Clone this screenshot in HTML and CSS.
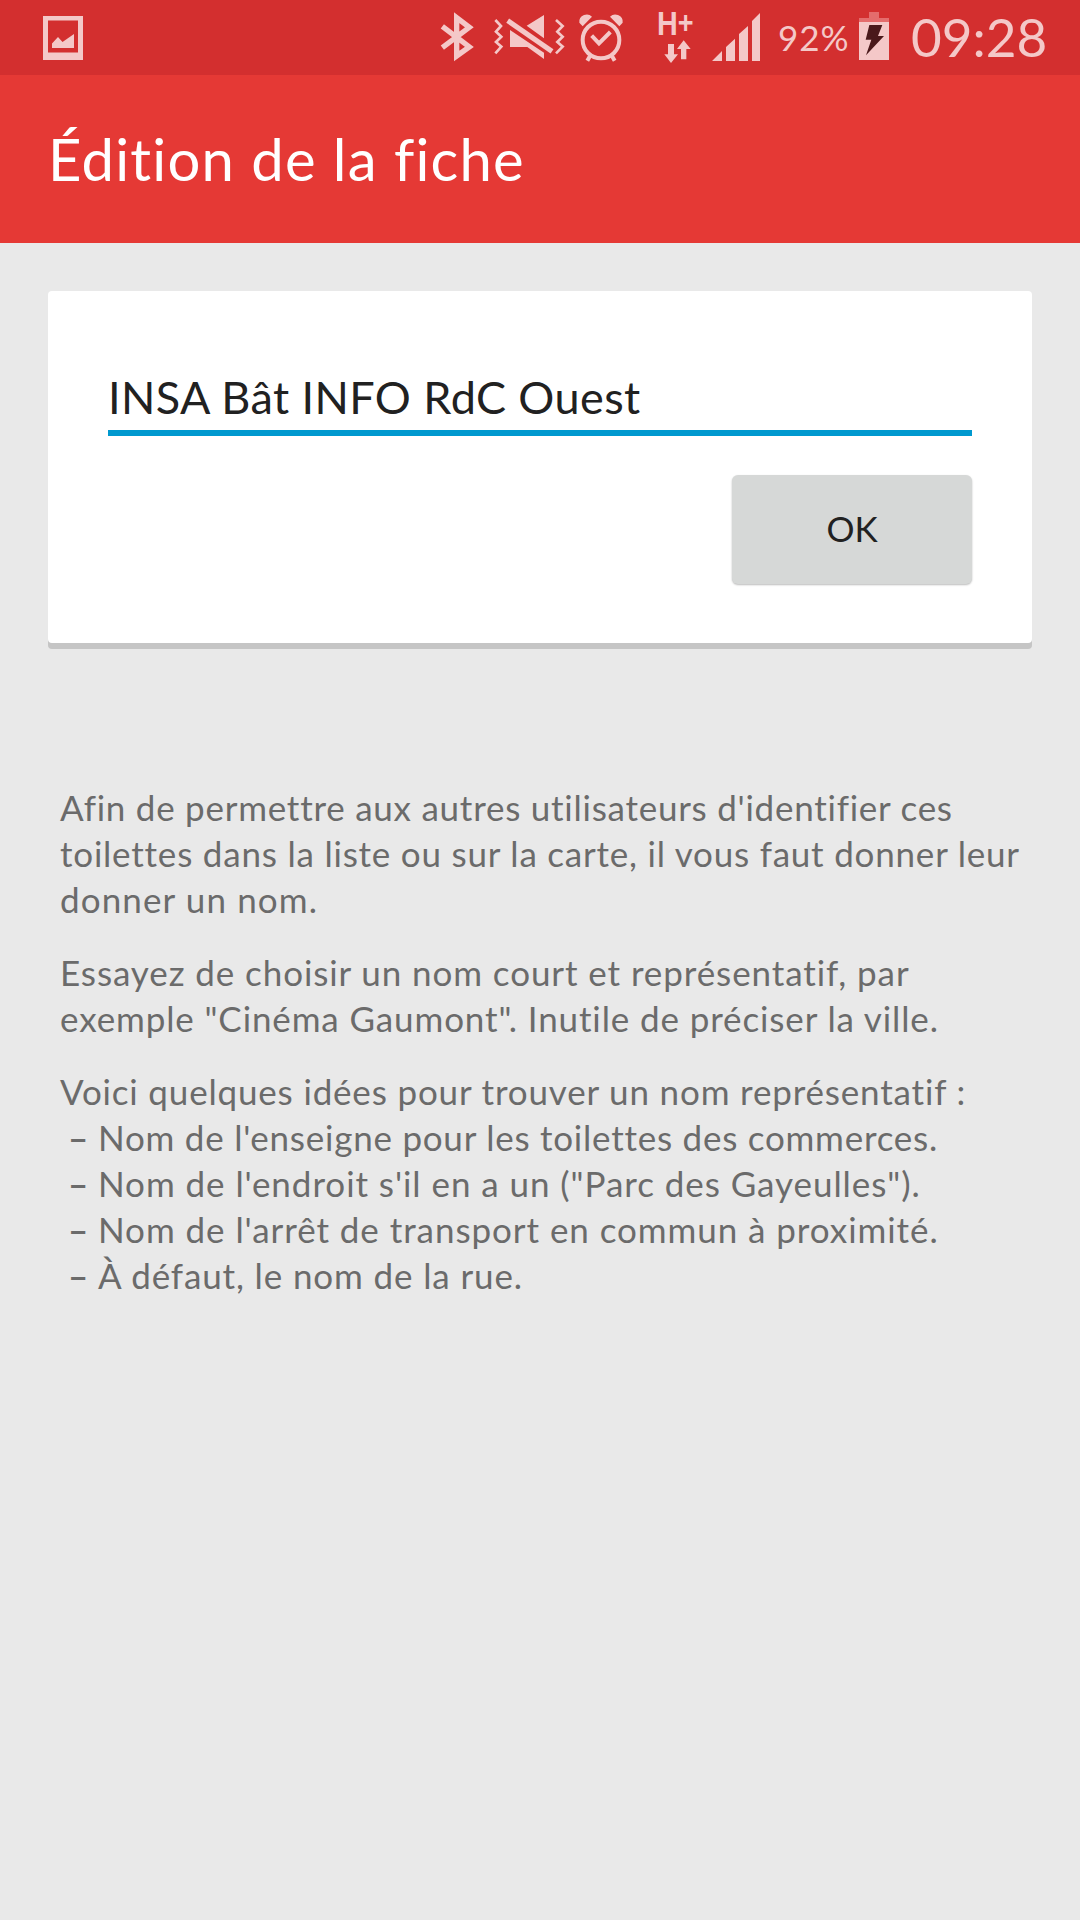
FILE: index.html
```html
<!DOCTYPE html>
<html lang="fr">
<head>
<meta charset="utf-8">
<title>Édition de la fiche</title>
<link rel="stylesheet" href="styles.css">
</head>
<body>
<header class="status-bar">
  <svg class="icon picture" viewBox="43 16 40 44" width="40" height="44"><path fill-rule="evenodd" d="M43 16h40v44H43zM48 20.500v32h30v-32z"/><path d="M52 43.500L58 37l4.500 5L74 34v14H52z"/></svg>
  <svg class="icon bluetooth" viewBox="60 36 105 150" width="35" height="50"><path class="line" stroke-width="16" stroke-miterlimit="10" d="M67 79L148 141L110 168V53L148 82L67 143"/></svg>
  <svg class="icon mute" viewBox="219 36 216 150" width="72" height="50"><path class="line" stroke-width="8" d="M226 60l17 18-15 17 16 15-16 16 16 14-18 20M408 60l20 18-16 17 16 15-16 16 16 14-20 20"/><path class="line" stroke-width="15" d="M263 62L396 154"/><path d="M372 45v70L320 77zM270 90L372 158v19L322 141H270z"/></svg>
  <svg class="icon alarm" viewBox="474 36 138 150" width="46" height="50"><circle class="line" cx="543" cy="120" r="55" stroke-width="12"/><path class="line" stroke-width="12" d="M515 107l22 23 34-34M510 168l-8 14M576 168l8 14"/><path d="M488 79L478 68Q476 52 492 45Q506 40 516 50ZM598 79L608 68Q610 52 594 45Q580 40 570 50Z"/></svg>
  <div class="network">
    <span class="network-type">H<span class="plus">+</span></span>
    <svg class="icon arrows" viewBox="732 120 81 69" width="27" height="23"><path d="M744 132h18v31h12l-21 26-20-26h11zM783 178v-31h-12l20-26 21 26h-13v31z"/></svg>
  </div>
  <svg class="icon signal" viewBox="876 36 144 147" width="48" height="49"><path d="M876 183l30-30v30zM918 183v-42l27-25v67zM957 183v-81l27-24v105zM996 183V63l24-24v144z"/></svg>
  <span class="percent">92%</span>
  <svg class="icon battery" viewBox="327 36 90 144" width="30" height="48"><path class="battery-empty" d="M357 36h30v18h30v12h-90V54h30z"/><path d="M327 66h90v114h-90z"/><path class="bolt" d="M358 75h39l-13 33h18l-54 58 16-47h-17z"/></svg>
  <span class="clock">09:28</span>
</header>
<div class="app-bar"><h1 class="title">Édition de la fiche</h1></div>
<main class="content">
  <section class="card">
    <div class="field">INSA Bât INFO RdC Ouest</div>
    <button class="ok">OK</button>
  </section>
  <section class="help">
    <p class="para"><span class="line-a">Afin de permettre aux autres utilisateurs d'identifier ces</span><span class="line-b">toilettes dans la liste ou sur la carte, il vous faut donner leur</span><span class="line-c">donner un nom.</span></p>
    <p class="para"><span class="line-d">Essayez de choisir un nom court et représentatif, par</span><span class="line-e">exemple "Cinéma Gaumont". Inutile de préciser la ville.</span></p>
    <p class="para"><span class="line-f">Voici quelques idées pour trouver un nom représentatif :</span></p>
    <ul class="ideas">
      <li><span class="line-g">Nom de l'enseigne pour les toilettes des commerces.</span></li>
      <li><span class="line-h">Nom de l'endroit s'il en a un ("Parc des Gayeulles").</span></li>
      <li><span class="line-i">Nom de l'arrêt de transport en commun à proximité.</span></li>
      <li><span class="line-j">À défaut, le nom de la rue.</span></li>
    </ul>
  </section>
</main>
</body>
</html>
```
FILE: styles.css
```css
* { box-sizing: border-box; }
body { margin: 0; min-height: 1920px; background: #e9e9e9; color: #6b6b6b; font-family: Lato, sans-serif; font-variant-ligatures: none; }
.status-bar { display: flex; align-items: flex-start; height: 75px; padding: 12px 0 0 43px; background: #d32f2f; color: #f4c8c8; }
.icon { display: block; flex: none; fill: #f4c8c8; overflow: visible; }
.icon .line { fill: none; stroke: #f4c8c8; }
.icon .battery-empty { fill: #e46c6c; }
.icon .bolt { fill: #4a191b; }
.picture { margin-top: 4px; }
.bluetooth { margin-left: 357px; }
.mute { margin-left: 18px; }
.alarm { margin-left: 13px; }
.network { width: 37px; height: 51px; margin-left: 34px; }
.network-type { display: flex; width: 42px; height: 28px; margin-left: -1px; font: bold 33px/24px "Liberation Sans", sans-serif; transform: scaleX(0.87); transform-origin: left; }
.plus { font-size: 31px; line-height: 22px; }
.arrows { margin-left: 6px; }
.signal { margin-left: 17px; }
.percent { width: 74px; margin-left: 18px; font-size: 35px; line-height: 42px; margin-top: 4px; letter-spacing: 1px; }
.battery { margin-left: 7px; }
.clock { margin-left: 22px; font-size: 53px; line-height: 64px; margin-top: -7px; }

.app-bar { height: 168px; padding: 49px 48px 0; background: #e53935; }
.title { margin: 0; color: #fff; font-size: 58px; font-weight: 400; line-height: 70px; letter-spacing: 1.22px; white-space: nowrap; }

.content { padding: 48px 48px 0; }
.card { display: flex; flex-direction: column; align-items: flex-end; height: 352px; padding: 79px 60px 0; border-radius: 4px; background: #fff; box-shadow: 0 6px 0 #c5c5c5; }
.field { width: 864px; height: 66px; border-bottom: 6px solid #0099cf; color: #212121; font-size: 45px; line-height: 54px; letter-spacing: 0.42px; white-space: nowrap; }
.ok { width: 240px; height: 109px; margin-top: 39px; padding: 0 0 4px; border: 0; border-radius: 6px; background: #d6d8d7; box-shadow: 0 1px 2px #bbb; color: #212121; font: 35px Lato, sans-serif; }

.help { padding: 141px 12px 0; font-size: 35px; line-height: 46px; white-space: nowrap; }
.para { margin: 0 0 27px; }
.para span { display: block; }
.para:last-of-type { margin-bottom: 0; }
.ideas { margin: 0; padding: 0; list-style: none; }
.ideas li { display: flex; padding-left: 8px; }
.ideas li::before { content: "–"; width: 30px; font-weight: 700; }

.line-a { letter-spacing: 0.75px; }
.line-b { letter-spacing: 0.79px; }
.line-c { letter-spacing: 1.12px; }
.line-d { letter-spacing: 0.91px; }
.line-e { letter-spacing: 0.88px; }
.line-f { letter-spacing: 0.83px; }
.line-g { letter-spacing: 0.76px; }
.line-h { letter-spacing: 0.94px; }
.line-i { letter-spacing: 0.94px; }
.line-j { letter-spacing: 0.87px; }
```
